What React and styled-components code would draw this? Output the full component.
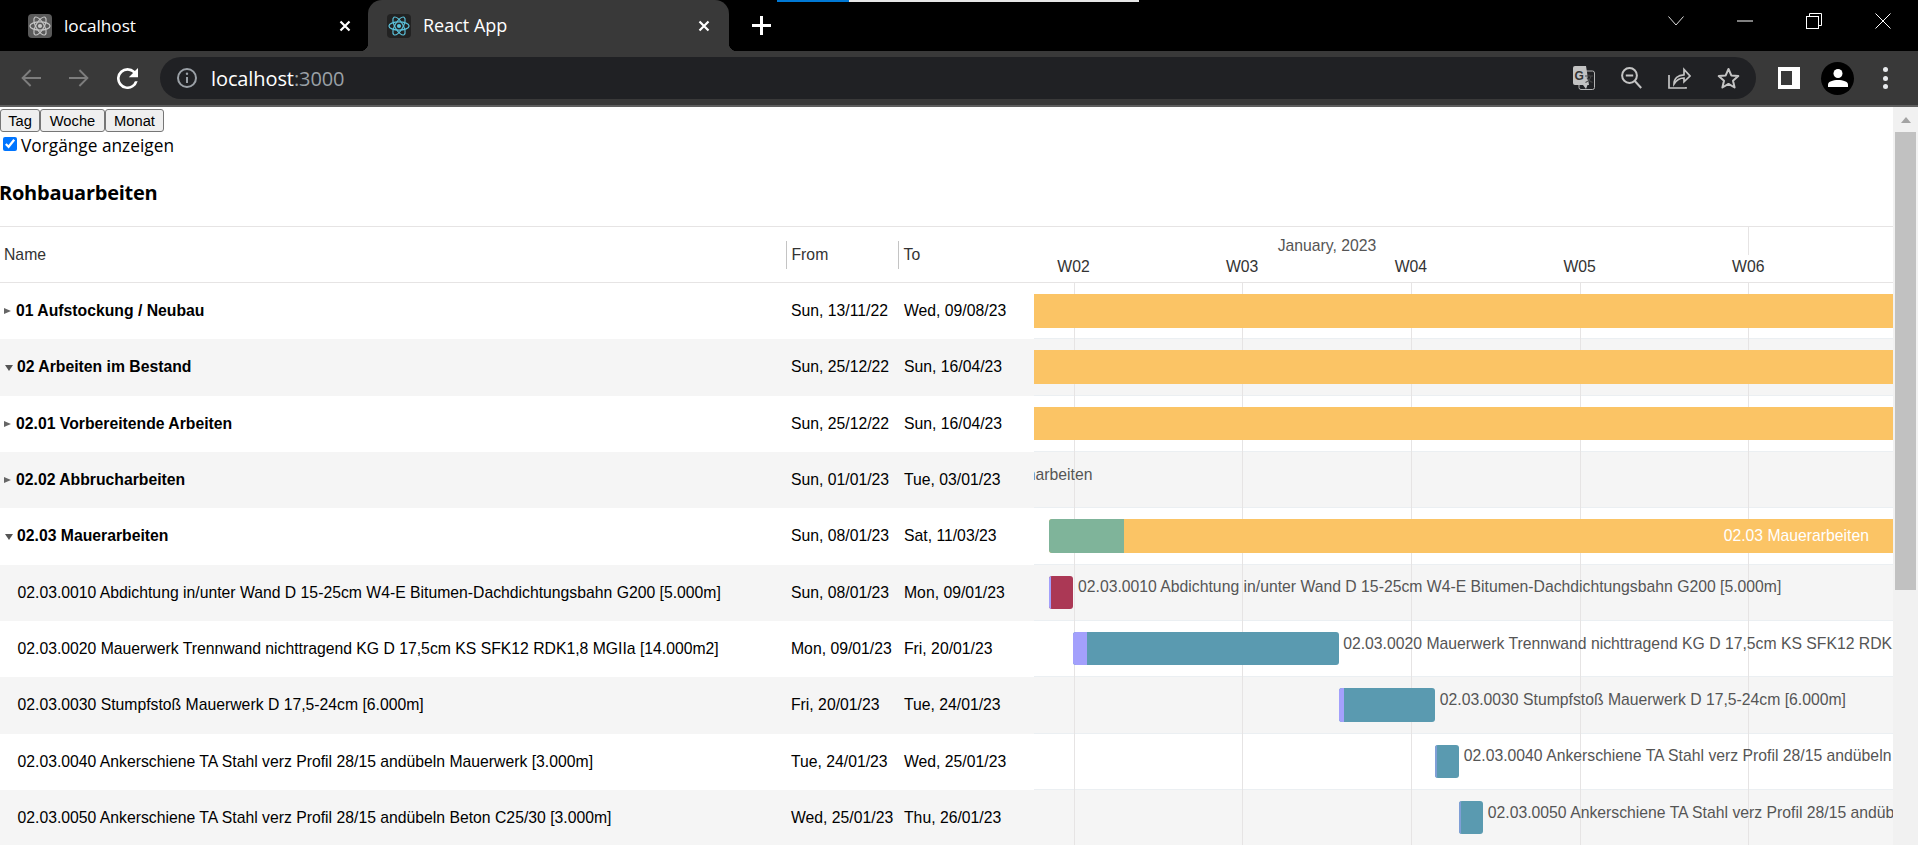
import React from "react";
import styled, { createGlobalStyle } from "styled-components";

const Global = createGlobalStyle`
  html, body { margin: 0; padding: 0; height: 100%; overflow: hidden; background: #fff; }
  * { box-sizing: border-box; }
`;

const UI = `"Open Sans", "Noto Sans", sans-serif`;
const ARIAL = `"Liberation Sans", Arial, sans-serif`;
const ROW_H = 56.33;
const CHART_X = 1034;

/* ---------- browser chrome ---------- */
const Window = styled.div`
  width: 1918px; height: 845px; display: flex; flex-direction: column; overflow: hidden;
`;
const TabStrip = styled.div`
  position: relative; height: 51px; flex: none; background: #000; display: flex; align-items: stretch; padding-left: 9px;
`;
const LoadBar = styled.div`
  position: absolute; top: 0; left: 777px; width: 362px; height: 2px;
  background: linear-gradient(90deg, #0078d4 0 72px, #e6e6e6 72px);
`;
const Tab = styled.div`
  position: relative; width: ${p => (p.$active ? 361 : 359)}px; display: flex; align-items: center; gap: 12px;
  padding: 0 ${p => (p.$active ? 19 : 17)}px 0 19px;
  background: ${p => (p.$active ? "#393939" : "transparent")};
  border-radius: 14px 14px 0 0;
  ${p => p.$active && `
    &::before, &::after { content: ""; position: absolute; bottom: 0; width: 8px; height: 8px; }
    &::before { left: -8px; background: radial-gradient(circle at 0 0, transparent 8px, #393939 8.5px); }
    &::after { right: -8px; background: radial-gradient(circle at 100% 0, transparent 8px, #393939 8.5px); }
  `}
`;
const Favicon = styled.div`
  width: 24px; height: 24px; border-radius: 4px; flex: none; display: flex; align-items: center; justify-content: center;
  background: ${p => (p.$active ? "#222" : "#5a5a5a")};
  color: ${p => (p.$active ? "#5cc3dc" : "#c6c6c6")};
`;
const TabTitle = styled.span`
  flex: 1; font: 400 ${p => (p.$active ? 18 : 17.2)}px ${UI}; color: #fff; white-space: nowrap; margin-top: -1px;
`;
const TabPlus = styled.div`
  display: flex; align-items: center; margin-left: 23px;
`;
const WindowControls = styled.div`
  margin-left: auto; display: flex; padding-right: 1px;
`;
const WinBtn = styled.div`
  width: 69px; height: 42px; display: flex; align-items: center; justify-content: center;
`;
const Toolbar = styled.div`
  height: 56px; flex: none; background: #393939; border-bottom: 2px solid #5e5e5e;
  padding: 6px 0 6px 21px; display: flex; align-items: center;
`;
const NavGroup = styled.div`
  display: flex; align-items: center; gap: 28px; width: 139px; flex: none;
`;
const Omnibox = styled.div`
  width: 1596px; height: 42px; background: #202124; border-radius: 21px; display: flex; align-items: center;
  padding: 0 16px 0 17px; flex: none;
`;
const Url = styled.span`
  margin-left: 14px; font: 400 20px ${UI}; color: #fff; flex: 1; letter-spacing: -0.1px;
`;
const UrlPort = styled.span`
  color: #9aa0a6;
`;
const OmniIcons = styled.div`
  display: flex; align-items: center; gap: 26px;
`;
const ToolIcons = styled.div`
  display: flex; align-items: center; margin-left: 22px;
`;
const Avatar = styled.div`
  width: 33px; height: 33px; border-radius: 50%; background: #000; margin-left: 21px; display: flex;
  align-items: center; justify-content: center;
`;
const Dots = styled.div`
  margin-left: 28.5px; display: flex; flex-direction: column; gap: 3.6px;
`;
const Dot = styled.i`
  display: block; width: 5px; height: 5px; border-radius: 50%; background: #e8eaed;
`;

/* ---------- page ---------- */
const Viewport = styled.div`
  flex: 1; display: flex; min-height: 0; background: #fff;
`;
const Page = styled.div`
  width: 1893px; flex: none; overflow: hidden; padding-top: 2px;
`;
const Scrollbar = styled.div`
  width: 25px; flex: none; background: #f1f1f1; display: flex; flex-direction: column; align-items: center;
`;
const ScrollArrow = styled.div`
  height: 25px; flex: none; display: flex; align-items: center; justify-content: center;
  &::before { content: ""; border: 5.5px solid transparent; border-top: 0; border-bottom: 6px solid #a3a3a3; }
`;
const ScrollThumb = styled.div`
  width: 21px; height: 458px; background: #c1c1c1;
`;
const ViewButtons = styled.div`
  display: flex; height: 23px;
`;
const ViewButton = styled.button`
  width: ${p => p.$w}px; height: 23px; padding: 0; margin: 0;
  background: #efefef; border: 1px solid #767676; border-radius: 3px; outline: 0;
  font: 400 14.7px ${ARIAL}; color: #000;
`;
const CheckRow = styled.label`
  height: 25px; display: flex; align-items: center; font: 400 17.3px ${UI}; color: #000; padding: 1px 0 0 3px;
`;
const Check = styled.input`
  width: 14px; height: 14px; margin: 0 4px 2px 0; accent-color: #0075ff;
`;
const Title = styled.h3`
  margin: 0 0 0 -1px; height: 69px; display: flex; align-items: center; font: 700 20px ${UI}; letter-spacing: -0.25px;
  color: #000; padding-top: 1px;
`;

/* ---------- gantt ---------- */
const Gantt = styled.div`
  display: flex; width: 1893px;
`;
const TablePane = styled.div`
  width: ${CHART_X}px; flex: none; font-family: ${ARIAL}; font-size: 15.75px;
`;
const TableHead = styled.div`
  height: 57px; border-top: 1px solid #e6e4e4; border-bottom: 1px solid #e6e4e4;
  display: grid; grid-template-columns: 786px 112px 136px; align-items: center;
`;
const HeadCell = styled.div`
  display: flex; align-items: center; height: 100%; color: #333; padding-left: ${p => (p.$first ? 4 : 0)}px;
  padding-top: 1px;
`;
const HeadSep = styled.i`
  display: block; width: 1px; height: 28px; background: #c4c4c4; margin-right: 4.5px; margin-top: -1px;
`;
const TableRow = styled.div`
  height: ${ROW_H}px; display: grid; grid-template-columns: 786px 112px 136px; align-items: center;
  background: ${p => (p.$odd ? "#f5f5f5" : "#fff")}; color: #000;
`;
const NameCell = styled.div`
  display: flex; align-items: center; padding-left: ${p => (p.$leaf ? 17.5 : 0)}px; white-space: nowrap;
  font-weight: ${p => (p.$leaf ? 400 : 700)};
`;
const Expander = styled.i`
  display: block; flex: none;
  ${p => p.$open ? `
    margin: 2px 4.5px 0 4.5px; border-left: 4px solid transparent; border-right: 4px solid transparent; border-top: 6.5px solid #555;
  ` : `
    margin: 0 5.5px 0 3.5px; border-top: 3.6px solid transparent; border-bottom: 3.6px solid transparent; border-left: 7px solid #666;
  `}
`;
const DateCell = styled.div`
  padding-left: ${p => p.$pad}px; white-space: nowrap;
`;
const ChartPane = styled.div`
  flex: 1; min-width: 0; position: relative; z-index: 0; overflow: hidden; font-family: ${ARIAL}; font-size: 15.75px;
`;
const Calendar = styled.div`
  height: 57px; border-top: 1px solid #e6e4e4; border-bottom: 1px solid #e6e4e4; position: relative;
`;
const CalText = styled.span`
  position: absolute; transform: translate(-50%, -50%); white-space: nowrap; color: ${p => p.$color};
`;
const CalTick = styled.i`
  position: absolute; top: 0; width: 1px; height: 28px; background: #e6e4e4;
`;
const GridLine = styled.i`
  position: absolute; top: 57px; bottom: 0; width: 1px; background: #e6e4e4; z-index: 1;
`;
const ChartRow = styled.div`
  position: relative; height: ${ROW_H}px; overflow: hidden;
  background: ${p => (p.$odd ? "#f5f5f5" : "#fff")};
  border-bottom: 1px solid #ebeff2;
`;
const Bar = styled.div`
  position: absolute; top: 11px; height: 33.5px; border-radius: 3px; overflow: hidden; z-index: 2;
  background: ${p => p.$color};
`;
const BarProgress = styled.div`
  height: 100%; background: ${p => p.$color};
`;
const BarLabel = styled.span`
  position: absolute; top: 50%; z-index: 3; white-space: nowrap; color: #555;
  transform: translate(${p => (p.$alignEnd ? "-100%" : "0")}, calc(-50% - 5.5px));
`;
const InnerLabel = styled.span`
  position: absolute; top: 50%; right: 24px; z-index: 3; transform: translateY(-50%); color: #fff; white-space: nowrap;
`;

/* ---------- icons ---------- */
const Atom = () => (
  <svg width="22" height="22" viewBox="0 0 24 24" fill="none" stroke="currentColor" strokeWidth="1.3">
    <circle cx="12" cy="12" r="2.3" fill="currentColor" stroke="none" />
    <ellipse cx="12" cy="12" rx="11" ry="4.4" />
    <ellipse cx="12" cy="12" rx="11" ry="4.4" transform="rotate(60 12 12)" />
    <ellipse cx="12" cy="12" rx="11" ry="4.4" transform="rotate(120 12 12)" />
  </svg>
);
const CloseX = () => (
  <svg width="12" height="12" viewBox="0 0 12 12" stroke="#fff" strokeWidth="2.2">
    <path d="M1.5 1.5l9 9M10.5 1.5l-9 9" />
  </svg>
);
const Plus = () => (
  <svg width="19" height="19" viewBox="0 0 19 19" stroke="#fff" strokeWidth="3">
    <path d="M9.5 0v19M0 9.5h19" />
  </svg>
);
const Arrow = ({ flip }) => (
  <svg width="20" height="20" viewBox="0 0 20 20" fill="none" stroke="#7d7d7d" strokeWidth="1.9"
    transform={flip ? "scale(-1 1)" : undefined}>
    <path d="M20 10H1.6M9.6 2L1.6 10l8 8" />
  </svg>
);
const Reload = () => (
  <svg width="21" height="21" viewBox="4 4 16 16" fill="#fff">
    <path d="M17.65 6.35A7.95 7.95 0 0 0 12 4a8 8 0 1 0 7.74 10h-2.08A6 6 0 1 1 12 6c1.66 0 3.14.69 4.22 1.78L13 11h7V4l-2.35 2.35z" />
  </svg>
);
const Info = () => (
  <svg width="20" height="20" viewBox="0 0 20 20" fill="none" stroke="#9aa0a6" strokeWidth="2" style={{ flex: "none" }}>
    <circle cx="10" cy="10" r="9" />
    <path d="M10 9v6" />
    <circle cx="10" cy="5.8" r="1.2" fill="#9aa0a6" stroke="none" />
  </svg>
);
const Translate = () => (
  <svg width="22" height="24" viewBox="0 0 22 24">
    <rect x="6" y="5" width="15.5" height="18.5" rx="2" fill="#202124" stroke="#b5b5b5" />
    <path d="M2 0h11l3 19H2a2 2 0 0 1-2-2V2a2 2 0 0 1 2-2z" fill="#c2c2c2" />
    <path d="M10 19l3 4 1.5-4z" fill="#c2c2c2" />
    <text x="1.5" y="13.5" fontFamily={ARIAL} fontWeight="700" fontSize="12" fill="#333">G</text>
    <path d="M12 10h8M16 8.5v1.500M18 10c-.8 3.500-3 5.500-5.500 6.500M14 11.500c1 2.500 3 4 5.500 5" fill="none" stroke="#444" strokeWidth="1.100" />
  </svg>
);
const ZoomOut = () => (
  <svg width="21" height="22" viewBox="0 0 21 22" fill="none" stroke="#c4c4c4" strokeWidth="2">
    <circle cx="8.500" cy="8.500" r="7.400" />
    <path d="M4.800 8.500h7.400M13.800 14l6.400 7" />
  </svg>
);
const Share = () => (
  <svg width="23" height="22" viewBox="0 0 23 22" fill="none" stroke="#c4c4c4" strokeWidth="1.700">
    <path d="M1 8v13h17v-1" />
    <path d="M6 17c0-5.500 4-9 10-9.200V2.500L22 9l-6 5.800V11c-4.500 0-7.500 2-10 6z" />
  </svg>
);
const Star = () => (
  <svg width="23" height="22" viewBox="0 0 23 22" fill="none" stroke="#c4c4c4" strokeWidth="2" strokeLinejoin="round">
    <path d="M11.500 2l2.800 6.400 7 .7-5.300 4.600 1.600 6.800-6.100-3.600-6.100 3.600 1.600-6.800L1.700 9.100l7-.7z" />
  </svg>
);
const SidePanel = () => (
  <svg width="22" height="22" viewBox="0 0 22 22">
    <rect width="22" height="22" fill="#fff" />
    <rect x="3" y="4" width="11" height="14" fill="#393939" />
  </svg>
);
const Person = () => (
  <svg width="20" height="18" viewBox="0 0 20 18" fill="#fff">
    <circle cx="10" cy="4.500" r="4.500" />
    <path d="M0 18v-2.500c0-3 5-4.500 10-4.500s10 1.500 10 4.500V18z" />
  </svg>
);
const Chevron = () => (
  <svg width="16" height="10" viewBox="0 0 16 10" fill="none" stroke="#ddd" strokeWidth="1"><path d="M.5.500L8 9l7.500-8.500" /></svg>
);
const Minimize = () => (
  <svg width="16" height="2" viewBox="0 0 16 2" stroke="#fff" strokeWidth="1"><path d="M0 1h16" /></svg>
);
const Restore = () => (
  <svg width="16" height="16" viewBox="0 0 16 16" fill="none" stroke="#fff" strokeWidth="1">
    <rect x=".5" y="3.500" width="12" height="12" />
    <path d="M3.500 3.500v-3h12v12h-3" />
  </svg>
);
const WinClose = () => (
  <svg width="16" height="16" viewBox="0 0 16 16" stroke="#fff" strokeWidth="1"><path d="M.5.500l15 15M15.500.500l-15 15" /></svg>
);

/* ---------- data ---------- */
const ORANGE = "#fbc465";
const TEAL = "#5a9ab0";
const PURPLE = "#a3a0fc";
const bar = (x0, x1, color, progress, progressColor) => ({ left: x0 - CHART_X, width: x1 - x0, color, progress, progressColor });

const rows = [
  { name: "01 Aufstockung / Neubau", from: "Sun, 13/11/22", to: "Wed, 09/08/23", state: "closed", bar: bar(900, 2000, ORANGE) },
  { name: "02 Arbeiten im Bestand", from: "Sun, 25/12/22", to: "Sun, 16/04/23", state: "open", bar: bar(900, 2000, ORANGE) },
  { name: "02.01 Vorbereitende Arbeiten", from: "Sun, 25/12/22", to: "Sun, 16/04/23", state: "closed", bar: bar(900, 2000, ORANGE) },
  { name: "02.02 Abbrucharbeiten", from: "Sun, 01/01/23", to: "Tue, 03/01/23", state: "closed", labelEnd: 58.5 },
  { name: "02.03 Mauerarbeiten", from: "Sun, 08/01/23", to: "Sat, 11/03/23", state: "open", bar: bar(1049.3, 2000, ORANGE, 74.7, "#7fb49a"), inner: true },
  { name: "02.03.0010 Abdichtung in/unter Wand D 15-25cm W4-E Bitumen-Dachdichtungsbahn G200 [5.000m]", from: "Sun, 08/01/23", to: "Mon, 09/01/23", bar: bar(1049.3, 1073.5, "#ab3855", 2, PURPLE) },
  { name: "02.03.0020 Mauerwerk Trennwand nichttragend KG D 17,5cm KS SFK12 RDK1,8 MGIIa [14.000m2]", from: "Mon, 09/01/23", to: "Fri, 20/01/23", bar: bar(1073.3, 1338.7, TEAL, 13.7, PURPLE) },
  { name: "02.03.0030 Stumpfstoß Mauerwerk D 17,5-24cm [6.000m]", from: "Fri, 20/01/23", to: "Tue, 24/01/23", bar: bar(1339, 1435.3, TEAL, 5, PURPLE) },
  { name: "02.03.0040 Ankerschiene TA Stahl verz Profil 28/15 andübeln Mauerwerk [3.000m]", from: "Tue, 24/01/23", to: "Wed, 25/01/23", bar: bar(1435.3, 1459.3, TEAL, 1.5, "#7f9fd6") },
  { name: "02.03.0050 Ankerschiene TA Stahl verz Profil 28/15 andübeln Beton C25/30 [3.000m]", from: "Wed, 25/01/23", to: "Thu, 26/01/23", bar: bar(1459.3, 1483.3, TEAL, 1.5, "#7f9fd6") },
];
const weeks = ["W02", "W03", "W04", "W05", "W06", "W07"];
const WEEK_W = 168.7;
const FIRST_LINE = 39.5;

const App = () => (
  <Window>
    <Global />
    <TabStrip>
      <LoadBar />
      <Tab>
        <Favicon><Atom /></Favicon>
        <TabTitle>localhost</TabTitle>
        <CloseX />
      </Tab>
      <Tab $active>
        <Favicon $active><Atom /></Favicon>
        <TabTitle $active>React App</TabTitle>
        <CloseX />
      </Tab>
      <TabPlus><Plus /></TabPlus>
      <WindowControls>
        <WinBtn><Chevron /></WinBtn>
        <WinBtn><Minimize /></WinBtn>
        <WinBtn><Restore /></WinBtn>
        <WinBtn><WinClose /></WinBtn>
      </WindowControls>
    </TabStrip>
    <Toolbar>
      <NavGroup>
        <Arrow />
        <Arrow flip />
        <Reload />
      </NavGroup>
      <Omnibox>
        <Info />
        <Url>localhost<UrlPort>:3000</UrlPort></Url>
        <OmniIcons>
          <Translate />
          <ZoomOut />
          <Share />
          <Star />
        </OmniIcons>
      </Omnibox>
      <ToolIcons>
        <SidePanel />
        <Avatar><Person /></Avatar>
        <Dots><Dot /><Dot /><Dot /></Dots>
      </ToolIcons>
    </Toolbar>
    <Viewport>
      <Page>
        <ViewButtons>
          <ViewButton $w={40}>Tag</ViewButton>
          <ViewButton $w={65}>Woche</ViewButton>
          <ViewButton $w={59}>Monat</ViewButton>
        </ViewButtons>
        <CheckRow><Check type="checkbox" defaultChecked />Vorgänge anzeigen</CheckRow>
        <Title>Rohbauarbeiten</Title>
        <Gantt>
          <TablePane>
            <TableHead>
              <HeadCell $first>Name</HeadCell>
              <HeadCell><HeadSep />From</HeadCell>
              <HeadCell><HeadSep />To</HeadCell>
            </TableHead>
            {rows.map((r, i) => (
              <TableRow key={r.name} $odd={i % 2 === 1}>
                <NameCell $leaf={!r.state}>
                  {r.state && <Expander $open={r.state === "open"} />}
                  {r.name}
                </NameCell>
                <DateCell $pad={5}>{r.from}</DateCell>
                <DateCell $pad={6}>{r.to}</DateCell>
              </TableRow>
            ))}
          </TablePane>
          <ChartPane>
            <Calendar>
              <CalText $color="#555" style={{ left: 293, top: 19 }}>January, 2023</CalText>
              <CalTick style={{ left: FIRST_LINE + 4 * WEEK_W }} />
              {weeks.map((w, i) => (
                <CalText key={w} $color="#333" style={{ left: FIRST_LINE + i * WEEK_W, top: 40 }}>{w}</CalText>
              ))}
            </Calendar>
            {weeks.map((w, i) => (
              <GridLine key={w} style={{ left: FIRST_LINE + i * WEEK_W }} />
            ))}
            {rows.map((r, i) => (
              <ChartRow key={r.name} $odd={i % 2 === 1}>
                {r.bar && (
                  <Bar $color={r.bar.color} style={{ left: r.bar.left, width: r.bar.width }}>
                    {r.bar.progress && <BarProgress $color={r.bar.progressColor} style={{ width: r.bar.progress }} />}
                  </Bar>
                )}
                {r.inner && <InnerLabel>{r.name}</InnerLabel>}
                {r.labelEnd && <BarLabel $alignEnd style={{ left: r.labelEnd }}>{r.name}</BarLabel>}
                {r.bar && !r.inner && r.bar.left > 0 && (
                  <BarLabel style={{ left: r.bar.left + r.bar.width + 4.5 }}>{r.name}</BarLabel>
                )}
              </ChartRow>
            ))}
          </ChartPane>
        </Gantt>
      </Page>
      <Scrollbar>
        <ScrollArrow />
        <ScrollThumb />
      </Scrollbar>
    </Viewport>
  </Window>
);

export default App;
